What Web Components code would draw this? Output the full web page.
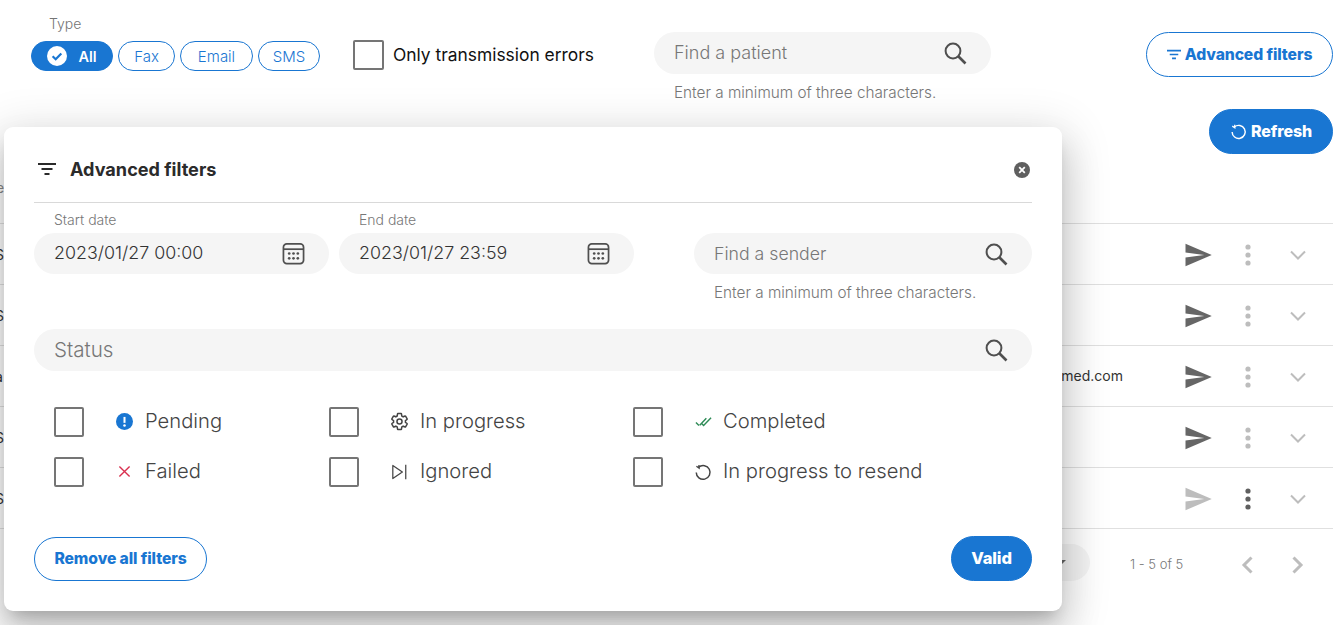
<!DOCTYPE html>
<html lang="en">
<head>
<meta charset="utf-8">
<title>Advanced filters</title>
<style>
html,body{margin:0;padding:0;background:#fff;height:625px;overflow:hidden;font-family:Inter,"Liberation Sans",sans-serif;color:#333}
</style>
</head>
<body>
<x-page></x-page>
<script>
const ICONS={
 search:'<svg viewBox="0 0 24 24" fill="none" stroke="currentColor"><circle cx="10" cy="10" r="7.4" stroke-width="2"/><path d="M15.5 15.5l7 7" stroke-width="2.6"/></svg>',
 calendar:'<svg viewBox="0 0 24 24" fill="none" stroke="currentColor" stroke-width="1.8"><rect x="1.5" y="2" width="21" height="20.5" rx="3.5"/><path d="M1.5 7.5h21"/><g fill="currentColor" stroke="none"><circle cx="7.5" cy="12" r="1.4"/><circle cx="12" cy="12" r="1.4"/><circle cx="16.5" cy="12" r="1.4"/><circle cx="7.5" cy="17" r="1.4"/><circle cx="12" cy="17" r="1.4"/><circle cx="16.5" cy="17" r="1.4"/></g></svg>',
 filter:'<svg viewBox="0 0 18 14" fill="none" stroke="currentColor" stroke-width="2"><path d="M0 2h18M3.5 7h11M6.5 12h5"/></svg>',
 send:'<svg viewBox="0 0 24 24" fill="currentColor"><path d="M2.01 21L23 12 2.01 3 2 10l15 2-15 2z"/></svg>',
 dots:'<svg viewBox="0 0 6 22" fill="currentColor"><circle cx="3" cy="3" r="2.6"/><circle cx="3" cy="11" r="2.6"/><circle cx="3" cy="19" r="2.6"/></svg>',
 chevdown:'<svg viewBox="0 0 16 10" fill="none" stroke="currentColor" stroke-width="2"><path d="M1 1.5l7 7 7-7"/></svg>',
 chevleft:'<svg viewBox="0 0 12 18" fill="none" stroke="currentColor" stroke-width="3"><path d="M10.5 1.5L3 9l7.5 7.5"/></svg>',
 chevright:'<svg viewBox="0 0 12 18" fill="none" stroke="currentColor" stroke-width="3"><path d="M1.5 1.5L9 9l-7.5 7.5"/></svg>',
 refresh:'<svg viewBox="0 0 24 24" fill="none" stroke="currentColor" stroke-width="2"><path d="M6.2 5.6A9.2 9.2 0 1 1 3 12.6"/><path d="M2.8 3.8l3.6 2.4-.2-4.2" stroke-width="1.8" transform="translate(.4 .6)"/></svg>',
 checkcircle:'<svg viewBox="0 0 20 20"><circle cx="10" cy="10" r="10" fill="#fff"/><path d="M5.6 10.2l3.1 3 5.6-5.8" fill="none" stroke="#1976d2" stroke-width="2.2"/></svg>',
 pending:'<svg viewBox="0 0 20 20"><circle cx="10" cy="10" r="10" fill="#1976d2"/><path d="M10 4.6v7" stroke="#fff" stroke-width="2.4"/><circle cx="10" cy="14.8" r="1.5" fill="#fff"/></svg>',
 failed:'<svg viewBox="0 0 14 14" fill="none" stroke="#d9304f" stroke-width="1.5"><path d="M1.5 1.5l11 11M12.5 1.5l-11 11"/></svg>',
 gear:'<svg viewBox="0 0 24 24" fill="none" stroke="currentColor" stroke-width="1.9"><path d="M19.43 12.98c.04-.32.07-.64.07-.98 0-.34-.03-.66-.07-.98l2.11-1.65c.19-.15.24-.42.12-.64l-2-3.46c-.09-.16-.26-.25-.44-.25-.06 0-.12.01-.17.03l-2.49 1c-.52-.4-1.08-.73-1.69-.98l-.38-2.65C14.46 2.18 14.25 2 14 2h-4c-.25 0-.46.18-.49.42l-.38 2.65c-.61.25-1.17.59-1.69.98l-2.49-1c-.06-.02-.12-.03-.18-.03-.17 0-.34.09-.43.25l-2 3.46c-.13.22-.07.49.12.64l2.11 1.65c-.04.32-.07.65-.07.98 0 .33.03.66.07.98l-2.11 1.65c-.19.15-.24.42-.12.64l2 3.46c.09.16.26.25.44.25.06 0 .12-.01.17-.03l2.49-1c.52.4 1.08.73 1.69.98l.38 2.65c.03.24.24.42.49.42h4c.25 0 .46-.18.49-.42l.38-2.65c.61-.25 1.17-.59 1.69-.98l2.49 1c.06.02.12.03.18.03.17 0 .34-.09.43-.25l2-3.46c.12-.22.07-.49-.12-.64l-2.11-1.65z"/><circle cx="12" cy="12" r="3.2"/></svg>',
 ignored:'<svg viewBox="0 0 16 16" fill="none" stroke="currentColor" stroke-width="1.1"><path d="M2.5 2.2v11.6L11 8z" stroke-linejoin="round"/><path d="M14 1.5v13"/></svg>',
 done:'<svg viewBox="0 0 18 12" fill="none" stroke="#2e8b57" stroke-width="1.5"><path d="M1 6.5l3.2 3.2M5 9.5l7-7.5M6.5 7l2.6 2.7L17 1.5"/></svg>',
 close:'<svg viewBox="0 0 16 16"><circle cx="8" cy="8" r="8" fill="#5f5f5f"/><path d="M5.2 5.2l5.6 5.6M10.8 5.2l-5.6 5.6" stroke="#fff" stroke-width="1.8"/></svg>'
};
class Base extends HTMLElement{
 constructor(){super();this.attachShadow({mode:'open'});}
 connectedCallback(){this.shadowRoot.innerHTML=this.render();}
 a(n,d=''){return this.hasAttribute(n)?this.getAttribute(n):d;}
}
const def=(n,f)=>customElements.define(n,class extends Base{render(){return f(this);}});

def('x-icon',e=>`<style>:host{display:inline-flex;width:${e.a('w','24')}px;height:${e.a('h',e.a('w','24'))}px;flex:none;color:${e.a('c','currentColor')}}svg{width:100%;height:100%;display:block}</style>${ICONS[e.a('n')]||''}`);

def('x-chip',e=>`<style>
:host{display:inline-flex;align-items:center;justify-content:center;box-sizing:border-box;height:30px;width:${e.a('w')}px;border:1px solid #1976d2;border-radius:15px;font-size:${e.hasAttribute('on')?'14.5':'15'}px;color:${e.hasAttribute('on')?'#fff':'#1976d2'};background:${e.hasAttribute('on')?'#1976d2':'#fff'};font-weight:${e.hasAttribute('on')?'600':'300'};gap:11px}
</style>${e.hasAttribute('on')?'<x-icon n="checkcircle" w="20"></x-icon>':''}<slot></slot>`);

def('x-box',e=>`<style>:host{display:block;box-sizing:border-box;width:${e.a('s','30')}px;height:30px;border:2px solid #757575;border-radius:2px;background:#fff;flex:none}</style>`);

def('x-field',e=>`<style>
:host{display:flex;align-items:center;justify-content:space-between;box-sizing:border-box;height:${e.a('h','41')}px;border-radius:21px;background:#f5f5f5;padding:0 ${e.a('pr','24')}px 0 20px;font-size:${e.a('fs','18')}px;font-weight:300;color:${e.hasAttribute('value')?'#333':'#777'};flex:none}
span{white-space:nowrap;margin-bottom:${e.a('up','2')}px}
</style><span><slot></slot></span><x-icon n="${e.a('icon','search')}" w="${e.a('iw','23')}" c="#4f4f4f"></x-icon>`);

def('x-btn',e=>{const p=e.hasAttribute('primary');return `<style>
:host{display:inline-flex;align-items:center;justify-content:center;box-sizing:border-box;height:${e.a('h','45')}px;width:${e.a('w','auto')}px;border-radius:23px;border:1px solid #1976d2;background:${p?'#1976d2':'#fff'};color:${p?'#fff':'#1976d2'};font-family:Inter,sans-serif;font-size:${e.a('fs','15.7')}px;font-weight:800;letter-spacing:-.1px;gap:${e.a('g','4')}px;white-space:nowrap;flex:none}
span{margin-bottom:1px}
</style><slot name="icon"></slot><span><slot></slot></span>`});

def('x-status',e=>`<style>
:host{display:grid;grid-template-columns:30px 61px auto;align-items:center;height:31px;font-size:20.2px;font-weight:300;color:#444;white-space:nowrap}
.i{display:flex;justify-content:center;width:80px}
.t{margin:-2px 0 0 ${e.a('tx','0')}px}
</style><x-box></x-box><span class="i"><slot name="icon"></slot></span><span class="t"><slot></slot></span>`);

def('x-row',e=>`<style>
:host{display:flex;align-items:center;box-sizing:border-box;height:61px;border-top:1px solid #e0e0e0;width:1333px;font-size:14px;font-weight:400;color:#333}
.l{margin-left:-5px;width:9px;overflow:visible;white-space:nowrap}
.m{margin:0 0 2px auto;text-align:right;white-space:nowrap}
.a{display:grid;grid-template-columns:30px 30px 30px;column-gap:20px;align-items:center;justify-items:center;margin:1px 20px 0 60px}
</style><span class="l">${e.a('l')}</span><span class="m">${e.a('m')}</span><div class="a"><x-icon n="send" w="30" c="${e.hasAttribute('muted')?'#bdbdbd':'#666'}"></x-icon><x-icon n="dots" w="6" h="22" c="${e.hasAttribute('muted')?'#5f5f5f':'#bdbdbd'}"></x-icon><x-icon n="chevdown" w="16" h="10" c="#bdbdbd"></x-icon></div>`);

def('x-toolbar',e=>`<style>
:host{display:flex;align-items:flex-start;height:109px;box-sizing:border-box;padding-top:15px;width:1333px;font-weight:300}
.type{margin-left:31px;width:289px;flex:none}
.type label{display:block;margin-left:18px;font-size:14px;line-height:17px;color:#757575}
.chips{display:flex;gap:5px;margin-top:9px}
.only{display:flex;align-items:center;gap:9px;margin:25px 0 0 33px;font-size:17.4px;font-weight:400;color:#111;width:301px;flex:none;white-space:nowrap}
.only span{margin-bottom:1px}
.s{width:337px;flex:none;margin-top:17px}
.hint{font-size:15.3px;color:#777;margin:10px 0 0 20px;line-height:17px;white-space:nowrap}
x-btn{margin:17px 0 0 auto}
</style>
<div class="type"><label>Type</label><div class="chips"><x-chip on w="82">All</x-chip><x-chip w="57">Fax</x-chip><x-chip w="73">Email</x-chip><x-chip w="62">SMS</x-chip></div></div>
<div class="only"><x-box s="31"></x-box><span>Only transmission errors</span></div>
<div class="s"><x-field h="42" iw="24" pr="24" up="1">Find a patient</x-field><div class="hint">Enter a minimum of three characters.</div></div>
<x-btn w="187"><x-icon slot="icon" n="filter" w="14" h="11"></x-icon>Advanced filters</x-btn>`);

def('x-table',e=>`<style>
:host{display:block;width:1333px}
.top{display:flex;justify-content:flex-end;height:45px}
.head{height:69px;box-sizing:border-box;font-size:14px;color:#888;padding-top:25px;line-height:17px}
.head span{margin-left:-4px;display:block}
.pager{display:flex;align-items:center;height:70px;border-top:1px solid #e0e0e0;box-sizing:border-box;font-size:13px;font-weight:300;color:#777}
.pill{width:120px;height:37px;border-radius:19px;background:#f5f5f5;margin-left:970px;flex:none;margin-top:-2px;box-sizing:border-box;padding:16px 0 0 88px}
.pill i{display:block;width:0;height:0;border:4px solid transparent;border-top-color:#666;border-bottom:0}
.range{margin-left:40px;width:53px;white-space:nowrap}
.nav{display:flex;gap:38px;margin-left:58px;color:#bdbdbd;margin-top:2px}
.nav x-icon:last-child{margin-left:1px}
</style>
<div class="top"><x-btn primary w="124" g="4" fs="16"><x-icon slot="icon" n="refresh" w="17"></x-icon>Refresh</x-btn></div>
<div class="head"><span>e</span></div>
<x-row l="S"></x-row><x-row l="S"></x-row><x-row l="a" m="med.com"></x-row><x-row l="S"></x-row><x-row l="S" muted></x-row>
<div class="pager"><div class="pill"><i></i></div><div class="range">1 - 5 of 5</div><div class="nav"><x-icon n="chevleft" w="12" h="18"></x-icon><x-icon n="chevright" w="12" h="18"></x-icon></div></div>`);

def('x-dialog',e=>`<style>
:host{position:absolute;left:4px;top:127px;width:1058px;height:484px;box-sizing:border-box;padding:0 30px;background:#fff;border-radius:9px;box-shadow:0 11px 15px -7px rgba(0,0,0,.2),0 24px 38px 3px rgba(0,0,0,.14),0 9px 46px 8px rgba(0,0,0,.12);display:flex;flex-direction:column;color:#333}
.h{display:flex;align-items:center;height:76px;box-sizing:border-box;border-bottom:1px solid #d9d9d9;padding:8px 2px 0 3px;flex:none}
.h b{margin-left:14px;font-size:18.1px;font-weight:700;color:#2b2b2b}
.h x-icon:first-child{margin-left:1px}
.h x-icon:last-child{margin-left:auto;margin-top:2px}
.dates{display:flex;align-items:flex-start;height:126px;flex:none;box-sizing:border-box;padding-top:8px}
.d{width:295px;margin-right:10px;flex:none}
.d label{display:block;margin-left:20px;height:22px;line-height:17px;font-size:14px;font-weight:300;color:#777}
.find{margin:22px 0 0 50px;width:338px}
.hint{font-size:15.3px;font-weight:300;color:#777;margin:10px 0 0 20px;line-height:17px;white-space:nowrap}
.grid{display:grid;grid-template-columns:275px 304px auto;row-gap:19px;margin:35px 0 0 20px}
.f{display:flex;justify-content:space-between;align-items:center;margin-top:auto;margin-bottom:30px}
</style>
<div class="h"><x-icon n="filter" w="18" h="14" c="#2b2b2b"></x-icon><b>Advanced filters</b><x-icon n="close" w="16"></x-icon></div>
<div class="dates">
<div class="d"><label>Start date</label><x-field value fs="17.85" icon="calendar" iw="23" pr="24">2023/01/27 00:00</x-field></div>
<div class="d"><label>End date</label><x-field value fs="17.85" icon="calendar" iw="23" pr="24">2023/01/27 23:59</x-field></div>
<div class="find"><x-field fs="17.7" iw="24" pr="24" up="0">Find a sender</x-field><div class="hint">Enter a minimum of three characters.</div></div>
</div>
<x-field h="42" fs="20.6" iw="24" pr="24">Status</x-field>
<div class="grid">
<x-status><x-icon slot="icon" n="pending" w="17"></x-icon>Pending</x-status>
<x-status><x-icon slot="icon" n="gear" w="19" c="#444"></x-icon>In progress</x-status>
<x-status tx="-1"><x-icon slot="icon" n="done" w="17" h="12"></x-icon>Completed</x-status>
<x-status><x-icon slot="icon" n="failed" w="13"></x-icon>Failed</x-status>
<x-status><x-icon slot="icon" n="ignored" w="18" c="#444"></x-icon>Ignored</x-status>
<x-status tx="-1"><x-icon slot="icon" n="refresh" w="18" c="#444"></x-icon>In progress to resend</x-status>
</div>
<div class="f"><x-btn w="173" h="44">Remove all filters</x-btn><x-btn primary w="81" h="45" fs="16.5">Valid</x-btn></div>`);

def('x-page',e=>`<style>:host{display:block;position:relative;width:1339px;height:625px;overflow:hidden}</style><x-toolbar></x-toolbar><x-table></x-table><x-dialog></x-dialog>`);
</script>
</body>
</html>
